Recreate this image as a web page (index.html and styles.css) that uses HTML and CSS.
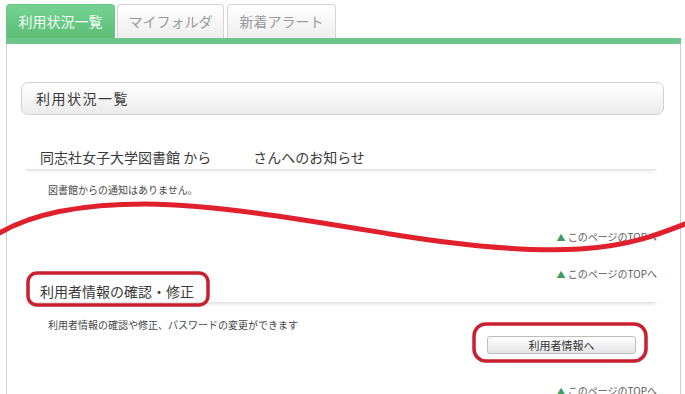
FILE: index.html
```html
<!DOCTYPE html>
<html lang="ja">
<head>
  <meta charset="UTF-8" />
  <title>利用状況一覧</title>
  <link rel="stylesheet" href="styles.css">
</head>
<body>
  <div class="page">
    <ul class="tabs">
      <li class="tab active">利用状況一覧</li>
      <li class="tab mid">マイフォルダ</li>
      <li class="tab">新着アラート</li>
    </ul>
    <div class="tab-bar"></div>

    <div class="panel">
      <div class="title-box">利用状況一覧</div>

      <div class="section">
        <h3>同志社女子大学図書館 から　　　さんへのお知らせ</h3>
        <p class="note">図書館からの通知はありません。</p>
        <div class="toplink first"><span class="arrow">▲</span> このページのTOPへ</div>
        <div class="toplink second"><span class="arrow">▲</span> このページのTOPへ</div>
      </div>

      <div class="section">
        <h3 class="tight">利用者情報の確認・修正</h3>
        <p class="note user">利用者情報の確認や修正、パスワードの変更ができます</p>
        <div class="actions">
          <button class="btn">利用者情報へ</button>
        </div>
        <div class="toplink last"><span class="arrow">▲</span> このページのTOPへ</div>
      </div>
    </div>
  </div>

  <!-- red marks drawn over the screenshot -->
  <svg class="marks" width="685" height="394" viewBox="0 0 685 394">
    <path class="wave" d="M-4,235 C30,214 80,204 145,204 C220,205 300,219 390,234 C470,247 530,252 580,249 C630,246 660,234 690,222" />
    <rect class="ring" x="28" y="273" width="180" height="32" rx="9" />
    <rect class="ring" x="474" y="324" width="172" height="37" rx="12" />
  </svg>
</body>
</html>
```

FILE: styles.css
```css
body {
  margin: 0;
  font-family: "Noto Sans CJK JP", "Liberation Sans", sans-serif;
  color: #3a3a3a;
  background: #fff;
  overflow: hidden;
}

.page {
  padding: 4px 4px 0 6px;
}

.tabs {
  display: flex;
  gap: 2px;
  margin: 0;
  padding: 0;
  list-style: none;
}

.tab {
  box-sizing: border-box;
  width: 109px;
  height: 34px;
  line-height: 33px;
  text-align: center;
  font-size: 14px;
  color: #9a9a9a;
  border: 1px solid #d4d4d4;
  border-bottom: none;
  border-radius: 4px 4px 0 0;
  background: linear-gradient(#ffffff, #eeeeee);
}

.tab.mid {
  width: 107px;
  margin-right: 1px;
}

.tab.active {
  color: #f2fff5;
  border-color: #68c783;
  background: linear-gradient(#74d392, #5cbd76);
}

.tab-bar {
  height: 6px;
  background: #6cc689;
}

.panel {
  border-left: 1px solid #cfcfcf;
  border-right: 1px solid #cfcfcf;
  padding: 38px 16px 40px 14px;
}

.title-box {
  height: 31px;
  padding-left: 14px;
  line-height: 31px;
  font-size: 14px;
  letter-spacing: 1.5px;
  border: 1px solid #d2d2d2;
  border-radius: 7px;
  background: linear-gradient(#ffffff, #ebebeb);
}

.section {
  margin: 0 7px 0 4px;
}

h3 {
  margin: 32px 0 0;
  padding: 0 0 2px 15px;
  font-size: 14px;
  font-weight: normal;
  line-height: 20px;
  border-bottom: 1px solid #e3e3e3;
  box-shadow: 0 3px 3px -2px rgba(0, 0, 0, 0.12);
}

h3.tight {
  margin-top: 0;
  padding-bottom: 1px;
}

.note {
  margin: 13px 0 0;
  padding-left: 23px;
  font-size: 10px;
  line-height: 14px;
  color: #474747;
}

.note.user {
  margin-top: 15px;
}

.toplink {
  text-align: right;
  font-size: 10px;
  line-height: 12px;
  color: #5a5a5a;
}

.toplink .arrow {
  color: #3f9c5f;
  font-size: 9px;
}

.toplink.first {
  margin-top: 34px;
}

.toplink.second {
  margin-top: 24px;
}

.toplink.last {
  margin-top: 31px;
}

.actions {
  display: flex;
  justify-content: flex-end;
  margin-top: 4px;
  padding-right: 21px;
}

.btn {
  width: 149px;
  height: 18px;
  padding: 0;
  font-family: inherit;
  font-size: 11px;
  line-height: 16px;
  color: #333;
  border: 1px solid #bdbdbd;
  border-radius: 3px;
  background: linear-gradient(#ffffff, #e4e4e4);
}

.marks {
  position: absolute;
  left: 0;
  top: 0;
  pointer-events: none;
}

.wave {
  fill: none;
  stroke: #e0202c;
  stroke-width: 5;
  stroke-linecap: round;
}

.ring {
  fill: none;
  stroke: #c8202f;
  stroke-width: 3.5;
}
```
